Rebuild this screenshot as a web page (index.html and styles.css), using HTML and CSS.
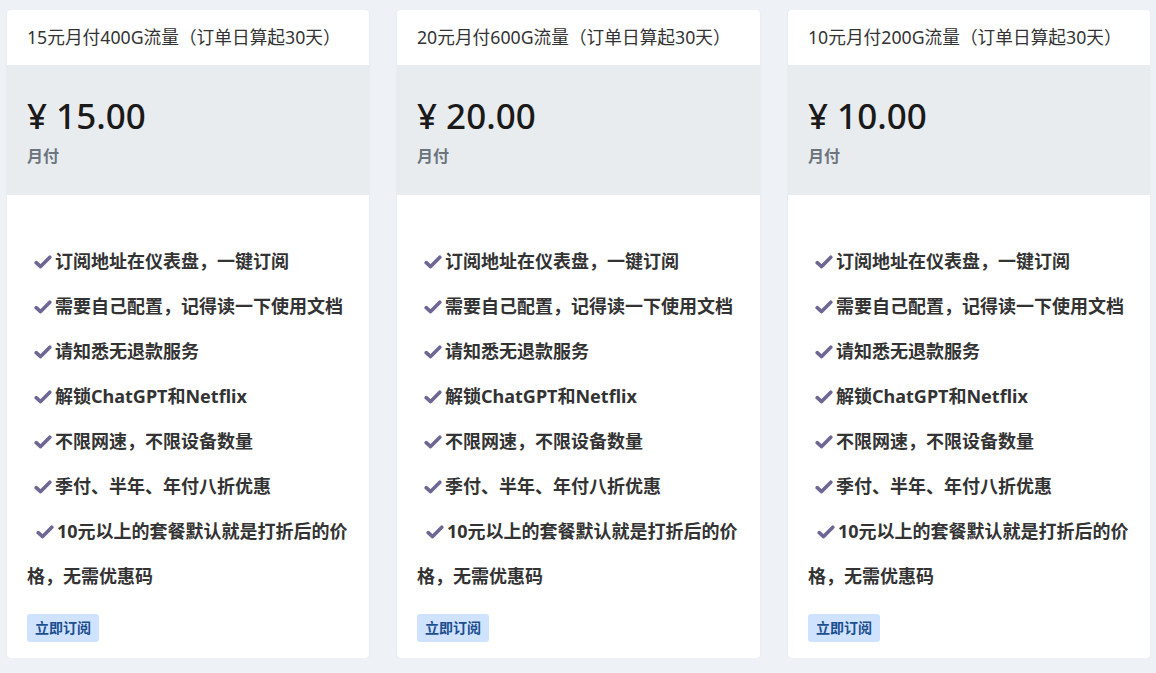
FILE: index.html
```html
<!DOCTYPE html>
<html lang="zh-CN">
<head>
    <meta charset="UTF-8">
    <meta name="viewport" content="width=device-width, initial-scale=1.0">
    <title>套餐订阅</title>
    <link rel="stylesheet" href="styles.css">
</head>
<body>
    <div class="plans">
        <!-- 套餐 15 元 -->
        <div class="plan-card">
            <div class="plan-header">15元月付400G流量（订单日算起30天）</div>
            <div class="plan-price">
                <div class="price">¥ 15.00</div>
                <div class="period">月付</div>
            </div>
            <div class="plan-body">
                <ul class="features">
                    <li><svg class="check" viewBox="0 0 18 14"><polyline points="2.2,7.6 6.6,11.6 15.8,2.2"/></svg>订阅地址在仪表盘，一键订阅</li>
                    <li><svg class="check" viewBox="0 0 18 14"><polyline points="2.2,7.6 6.6,11.6 15.8,2.2"/></svg>需要自己配置，记得读一下使用文档</li>
                    <li><svg class="check" viewBox="0 0 18 14"><polyline points="2.2,7.6 6.6,11.6 15.8,2.2"/></svg>请知悉无退款服务</li>
                    <li><svg class="check" viewBox="0 0 18 14"><polyline points="2.2,7.6 6.6,11.6 15.8,2.2"/></svg>解锁ChatGPT和Netflix</li>
                    <li><svg class="check" viewBox="0 0 18 14"><polyline points="2.2,7.6 6.6,11.6 15.8,2.2"/></svg>不限网速，不限设备数量</li>
                    <li><svg class="check" viewBox="0 0 18 14"><polyline points="2.2,7.6 6.6,11.6 15.8,2.2"/></svg>季付、半年、年付八折优惠</li>
                    <li class="wrap"><svg class="check" viewBox="0 0 18 14"><polyline points="2.2,7.6 6.6,11.6 15.8,2.2"/></svg>10元以上的套餐默认就是打折后的价<br>格，无需优惠码</li>
                </ul>
                <a href="#" class="btn-subscribe">立即订阅</a>
            </div>
        </div>

        <!-- 套餐 20 元 -->
        <div class="plan-card">
            <div class="plan-header">20元月付600G流量（订单日算起30天）</div>
            <div class="plan-price">
                <div class="price">¥ 20.00</div>
                <div class="period">月付</div>
            </div>
            <div class="plan-body">
                <ul class="features">
                    <li><svg class="check" viewBox="0 0 18 14"><polyline points="2.2,7.6 6.6,11.6 15.8,2.2"/></svg>订阅地址在仪表盘，一键订阅</li>
                    <li><svg class="check" viewBox="0 0 18 14"><polyline points="2.2,7.6 6.6,11.6 15.8,2.2"/></svg>需要自己配置，记得读一下使用文档</li>
                    <li><svg class="check" viewBox="0 0 18 14"><polyline points="2.2,7.6 6.6,11.6 15.8,2.2"/></svg>请知悉无退款服务</li>
                    <li><svg class="check" viewBox="0 0 18 14"><polyline points="2.2,7.6 6.6,11.6 15.8,2.2"/></svg>解锁ChatGPT和Netflix</li>
                    <li><svg class="check" viewBox="0 0 18 14"><polyline points="2.2,7.6 6.6,11.6 15.8,2.2"/></svg>不限网速，不限设备数量</li>
                    <li><svg class="check" viewBox="0 0 18 14"><polyline points="2.2,7.6 6.6,11.6 15.8,2.2"/></svg>季付、半年、年付八折优惠</li>
                    <li class="wrap"><svg class="check" viewBox="0 0 18 14"><polyline points="2.2,7.6 6.6,11.6 15.8,2.2"/></svg>10元以上的套餐默认就是打折后的价<br>格，无需优惠码</li>
                </ul>
                <a href="#" class="btn-subscribe">立即订阅</a>
            </div>
        </div>

        <!-- 套餐 10 元 -->
        <div class="plan-card">
            <div class="plan-header">10元月付200G流量（订单日算起30天）</div>
            <div class="plan-price">
                <div class="price">¥ 10.00</div>
                <div class="period">月付</div>
            </div>
            <div class="plan-body">
                <ul class="features">
                    <li><svg class="check" viewBox="0 0 18 14"><polyline points="2.2,7.6 6.6,11.6 15.8,2.2"/></svg>订阅地址在仪表盘，一键订阅</li>
                    <li><svg class="check" viewBox="0 0 18 14"><polyline points="2.2,7.6 6.6,11.6 15.8,2.2"/></svg>需要自己配置，记得读一下使用文档</li>
                    <li><svg class="check" viewBox="0 0 18 14"><polyline points="2.2,7.6 6.6,11.6 15.8,2.2"/></svg>请知悉无退款服务</li>
                    <li><svg class="check" viewBox="0 0 18 14"><polyline points="2.2,7.6 6.6,11.6 15.8,2.2"/></svg>解锁ChatGPT和Netflix</li>
                    <li><svg class="check" viewBox="0 0 18 14"><polyline points="2.2,7.6 6.6,11.6 15.8,2.2"/></svg>不限网速，不限设备数量</li>
                    <li><svg class="check" viewBox="0 0 18 14"><polyline points="2.2,7.6 6.6,11.6 15.8,2.2"/></svg>季付、半年、年付八折优惠</li>
                    <li class="wrap"><svg class="check" viewBox="0 0 18 14"><polyline points="2.2,7.6 6.6,11.6 15.8,2.2"/></svg>10元以上的套餐默认就是打折后的价<br>格，无需优惠码</li>
                </ul>
                <a href="#" class="btn-subscribe">立即订阅</a>
            </div>
        </div>
    </div>
</body>
</html>
```

FILE: styles.css
```css
/* Fond de page gris bleuté */
body {
    margin: 0;
    font-family: "Noto Sans", "Noto Sans CJK SC", sans-serif;
    color: #212529;
    background-color: #eef1f6;
}

/* Grille des trois cartes */
.plans {
    display: grid;
    grid-template-columns: 362px 363px 362px;
    gap: 28px;
    padding: 10px 6px 0 7px;
}

.plan-card {
    background: #ffffff;
    border-radius: 4px;
    overflow: hidden;
    box-shadow: 0 1px 3px rgba(0, 0, 0, 0.05);
}

.plan-header {
    height: 55px;
    line-height: 55px;
    padding: 0 20px;
    font-size: 17.7px;
    color: #333;
    white-space: nowrap;
}

/* Bloc prix */
.plan-price {
    background-color: #e9ecef;
    padding: 30px 20px 27px;
}

.price {
    font-size: 35px;
    line-height: 42px;
    font-weight: 500;
    color: #1a1a1a;
}

.period {
    margin-top: 7px;
    font-size: 16px;
    line-height: 24px;
    font-weight: bold;
    color: #6c757d;
}

/* Liste des avantages */
.plan-body {
    padding: 44px 20px 16px;
}

.features {
    list-style: none;
    margin: 0;
    padding: 0;
}

.features li {
    font-size: 18px;
    font-weight: bold;
    line-height: 45px;
    color: #333;
    text-indent: 7px;
    white-space: nowrap;
}

.features li.wrap {
    text-indent: 9px;
}

.check {
    width: 18px;
    height: 14px;
    margin-right: 3px;
    vertical-align: -1px;
    fill: none;
    stroke: #6e6794;
    stroke-width: 3.6;
    stroke-linecap: round;
    stroke-linejoin: round;
}

.btn-subscribe {
    display: inline-block;
    margin-top: 15px;
    padding: 0 8px;
    height: 28px;
    line-height: 28px;
    font-size: 14px;
    font-weight: bold;
    color: #1c4f8f;
    background-color: #cfe2ff;
    border-radius: 3px;
    text-decoration: none;
}
```
